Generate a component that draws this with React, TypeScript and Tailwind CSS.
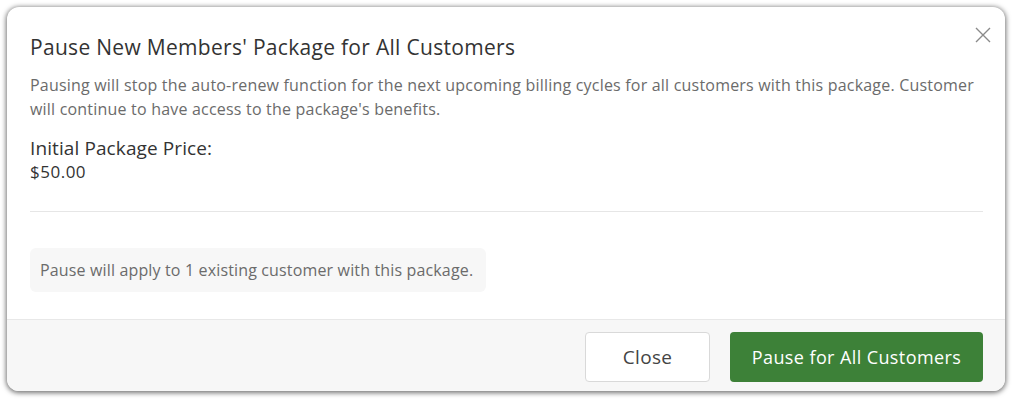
import React from 'react';

export default function App() {
    return (
        <div className="w-[1014px] h-[400px] bg-white p-[7px] pr-[9px]" style={{ fontFamily: '"Open Sans", Lato, sans-serif' }}>
            <div className="relative h-[384px] bg-white rounded-[12px] shadow-[0_1px_5px_1px_rgba(0,0,0,0.55)] overflow-hidden flex flex-col">
                <button className="absolute top-[20px] right-[14px] w-[16px] h-[16px] text-[#8a8a8a]">
                    <svg viewBox="0 0 16 16" className="w-[16px] h-[16px]" fill="none" stroke="currentColor" strokeWidth="1.4">
                        <path d="M1 1 L15 15 M15 1 L1 15" />
                    </svg>
                </button>

                <div className="flex-1 px-[23px] pt-[26px] pr-[22px]">
                    <h2 className="text-[21px] leading-[28px] tracking-[0.3px] text-[#333]">
                        Pause New Members' Package for All Customers
                    </h2>
                    <p className="mt-3 text-[16px] leading-[24px] tracking-[0.2px] text-[#6b6b6b]">
                        Pausing will stop the auto-renew function for the next upcoming billing cycles for all customers with this package. Customer will continue to have access to the package's benefits.
                    </p>
                    <div className="mt-[15px] text-[19px] leading-[24px] tracking-[0.1px] text-[#333]">Initial Package Price:</div>
                    <div className="text-[17px] leading-[24px] tracking-[0.5px] text-[#333]">$50.00</div>
                    <div className="mt-[27px] border-t border-[#e6e6e6]" />
                    <div className="mt-[36px] w-[456px] h-[44px] flex items-center px-[10px] bg-[#f7f7f7] rounded-md text-[16px] tracking-[0.15px] whitespace-nowrap text-[#6b6b6b]">
                        Pause will apply to 1 existing customer with this package.
                    </div>
                </div>

                <div className="h-[72px] bg-[#f7f7f7] border-t border-[#e8e8e8] flex justify-end items-start pt-[12px] pr-[22px] gap-[20px]">
                    <button className="w-[125px] h-[50px] bg-white border border-[#d9d9d9] rounded-[4px] text-[19px] tracking-[0.3px] text-[#444]">
                        Close
                    </button>
                    <button className="w-[253px] h-[50px] bg-[#3d8138] rounded-[4px] text-[18px] tracking-[0.4px] text-white">
                        Pause for All Customers
                    </button>
                </div>
            </div>
        </div>
    );
}
